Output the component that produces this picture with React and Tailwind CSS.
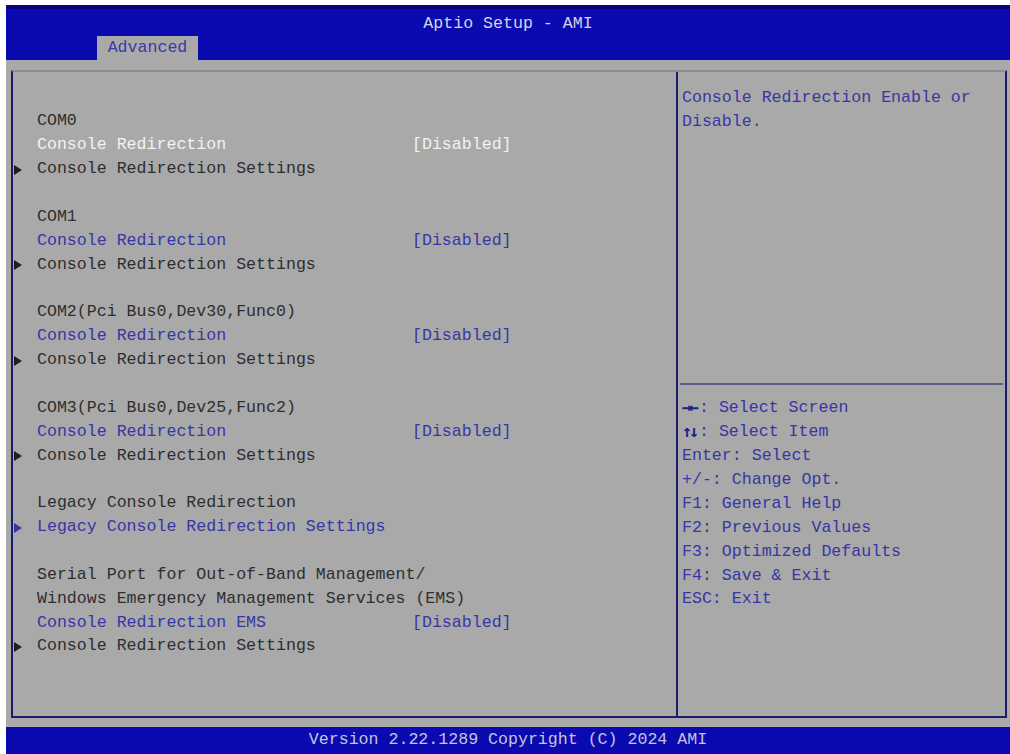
import React from "react";

const FONT = { fontFamily: '"Liberation Mono", "DejaVu Sans Mono", monospace' };

function Tri({ color }) {
  return (
    <svg width="8" height="10" viewBox="0 0 8 10" className="block">
      <polygon points="0,0 8,5 0,10" fill={color} />
    </svg>
  );
}

const rows = [
  { t: "COM0" },
  { t: "Console Redirection", v: "[Disabled]", c: "text-[#f2f2f2]" },
  { t: "Console Redirection Settings", arrow: true },
  { blank: true },
  { t: "COM1" },
  { t: "Console Redirection", v: "[Disabled]", c: "text-[#3636a6]" },
  { t: "Console Redirection Settings", arrow: true },
  { blank: true },
  { t: "COM2(Pci Bus0,Dev30,Func0)" },
  { t: "Console Redirection", v: "[Disabled]", c: "text-[#3636a6]" },
  { t: "Console Redirection Settings", arrow: true },
  { blank: true },
  { t: "COM3(Pci Bus0,Dev25,Func2)" },
  { t: "Console Redirection", v: "[Disabled]", c: "text-[#3636a6]" },
  { t: "Console Redirection Settings", arrow: true },
  { blank: true },
  { t: "Legacy Console Redirection" },
  { t: "Legacy Console Redirection Settings", arrow: true, c: "text-[#3636a6]", ac: "#3636a6" },
  { blank: true },
  { t: "Serial Port for Out-of-Band Management/" },
  { t: "Windows Emergency Management Services (EMS)" },
  { t: "Console Redirection EMS", v: "[Disabled]", c: "text-[#3636a6]" },
  { t: "Console Redirection Settings", arrow: true },
];

const keys = [
  ["→←", ": Select Screen"],
  ["↑↓", ": Select Item"],
  ["", "Enter: Select"],
  ["", "+/-: Change Opt."],
  ["", "F1: General Help"],
  ["", "F2: Previous Values"],
  ["", "F3: Optimized Defaults"],
  ["", "F4: Save & Exit"],
  ["", "ESC: Exit"],
];

export default function App() {
  return (
    <div
      className="w-[1010px] h-[754px] bg-white pt-[5px] pl-[6px] overflow-hidden text-[16.6px] tracking-[0px]"
      style={FONT}
    >
      <div className="flex flex-col h-[749px] bg-[#a9a9aa]">
        {/* header */}
        <div className="h-[55px] bg-[#0a0ab0] border-t-[4px] border-[#050580] flex flex-col">
          <div className="h-[27px] flex items-center justify-center text-[#d4d4e4] pt-[3px]">
            Aptio Setup - AMI
          </div>
          <div className="flex pl-[91px] mt-auto">
            <div className="h-[24px] w-[101px] bg-[#a9a9aa] text-[#3a3aa8] flex items-center justify-center">
              Advanced
            </div>
          </div>
        </div>

        {/* body */}
        <div className="flex-1 pt-[10px] pl-[5px] pr-[3px] pb-[9px] flex flex-col">
          <div className="flex-1 flex border-t-2 border-t-[#8c8c94] border-l-2 border-r-2 border-b-2 border-l-[#1c1c6e] border-r-[#1c1c6e] border-b-[#1c1c6e]">
            {/* left */}
            <div className="w-[663px] pt-[38px] text-[#2e2e2e]">
              {rows.map((r, i) => (
                <div key={i} className="h-[23.86px] flex items-center">
                  <div className="w-[24px] pl-[1px] flex items-center">
                    {r.arrow && <Tri color={r.ac || "#1e1e1e"} />}
                  </div>
                  {!r.blank && (
                    <>
                      <div className={`w-[375px] whitespace-pre ${r.c || ""}`}>{r.t}</div>
                      {r.v && <div className={r.c}>{r.v}</div>}
                    </>
                  )}
                </div>
              ))}
            </div>
            {/* right */}
            <div className="flex-1 border-l-2 border-[#1c1c6e] flex flex-col text-[#3636a6]">
              <div className="h-[311px] pt-[15px] pl-[4px]">
                <div className="h-[23.86px] flex items-center">Console Redirection Enable or</div>
                <div className="h-[23.86px] flex items-center">Disable.</div>
              </div>
              <div className="mx-[2px] h-[2px] bg-[#5c5c86]" />
              <div className="pt-[12px] pl-[4px]">
                {keys.map(([a, b], i) => (
                  <div key={i} className="h-[23.86px] flex items-center whitespace-pre">
                    {a && (
                      <span
                        className="text-[#20208a] font-bold w-[17px] tracking-[-3px]"
                        style={{ fontFamily: '"DejaVu Sans Mono", monospace' }}
                      >
                        {a}
                      </span>
                    )}
                    <span>{b}</span>
                  </div>
                ))}
              </div>
            </div>
          </div>
        </div>

        {/* footer */}
        <div className="h-[27px] bg-[#0a0ab0] flex items-center justify-center text-[#c4c4dc]">
          Version 2.22.1289 Copyright (C) 2024 AMI
        </div>
      </div>
    </div>
  );
}
